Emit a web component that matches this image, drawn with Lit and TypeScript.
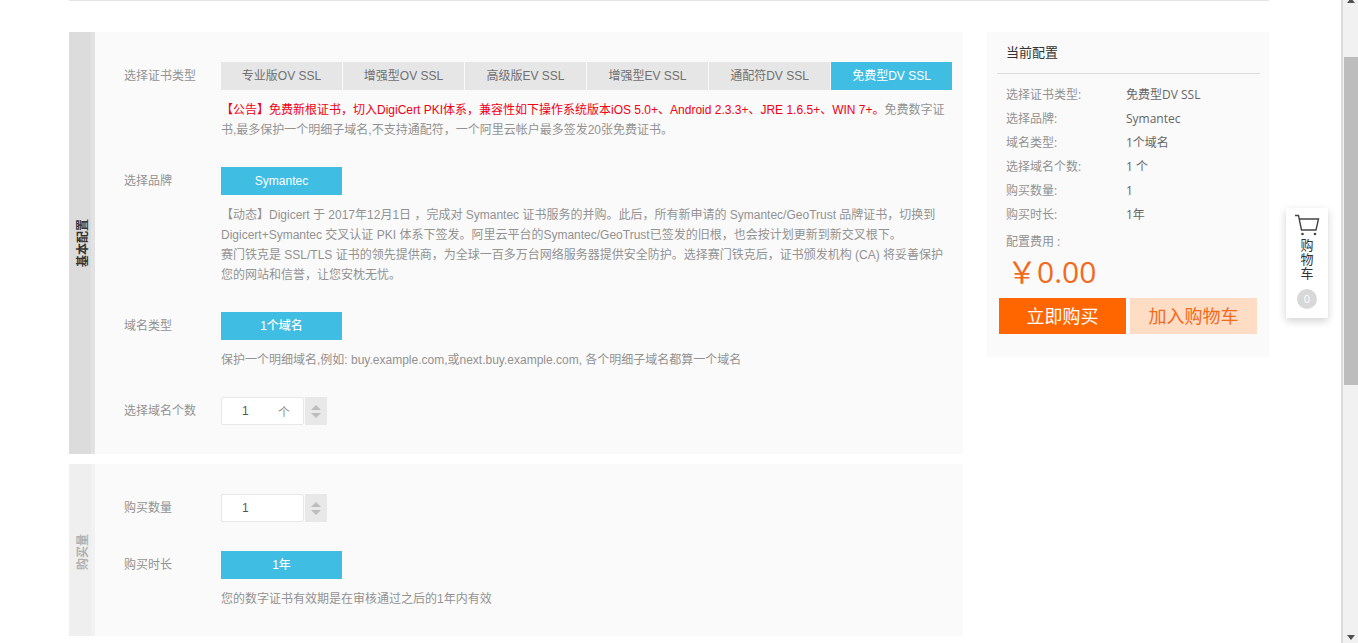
import { LitElement, html, css } from "lit";
import { customElement } from "lit/decorators.js";

const TYPES = ["专业版OV SSL", "增强型OV SSL", "高级版EV SSL", "增强型EV SSL", "通配符DV SSL", "免费型DV SSL"];
const SUMMARY: [string, string][] = [
  ["选择证书类型:", "免费型DV SSL"],
  ["选择品牌:", "Symantec"],
  ["域名类型:", "1个域名"],
  ["选择域名个数:", "1 个"],
  ["购买数量:", "1"],
  ["购买时长:", "1年"],
];

@customElement("app-root")
export class AppRoot extends LitElement {
  static styles = css`
    :host {
      display: flex;
      position: relative;
      height: 643px;
      overflow: hidden;
      background: #fff;
      font-family: "Liberation Sans", "Noto Sans CJK SC", sans-serif;
      font-size: 12px;
      color: #929292;
    }
    .page { flex: 1; min-width: 0; }
    .wrap { width: 1200px; margin-left: 69px; }
    .topline { height: 1px; background: #e4e4e4; margin-bottom: 31px; }
    .columns { display: flex; align-items: flex-start; gap: 24px; }
    .left { width: 894px; display: flex; flex-direction: column; gap: 10px; }
    .panel { display: flex; background: #fafafa; }
    .panel.basic { height: 422px; }
    .panel.buy { height: 172px; }
    .side {
      width: 26px;
      box-sizing: border-box;
      flex: none;
      display: flex;
      align-items: center;
      justify-content: center;
      background: #dcdcdc;
      border-right: 4px solid #e2e2e2;
      padding-left: 2px;
      color: #333;
      font-weight: bold;
      font-size: 12px;
    }
    .side span { writing-mode: vertical-rl; text-orientation: sideways; transform: rotate(180deg); }
    .buy .side { background: #efefef; border-right-color: #f2f2f2; color: #b0b0b0; }
    .buy .side span { transform: translateY(2px) rotate(180deg); }
    .body { flex: 1; padding: 30px 0 0 29px; display: flex; flex-direction: column; }
    .row { display: flex; }
    .label { width: 97px; flex: none; line-height: 28px; color: #929292; }
    .content { flex: 1; min-width: 0; }
    .tabs { display: flex; gap: 1px; }
    .btn {
      width: 121px;
      height: 28px;
      line-height: 28px;
      text-align: center;
      background: #e6e6e6;
      color: #707070;
      flex: none;
    }
    .btn.on { background: #40bde3; color: #fff; font-weight: 500; }
    .tabs .btn.on { font-weight: normal; }
    .note { width: 728px; line-height: 20px; margin-top: 10px; color: #929292; }
    .red { color: #f00014; }
    .r1 { margin-bottom: 27px; }
    .r2 { margin-bottom: 27px; }
    .r3 { margin-bottom: 27px; }
    .stepper { display: flex; height: 28px; gap: 1px; }
    .input {
      height: 26px;
      border: 1px solid #e8e8e8;
      background: #fff;
      display: flex;
      align-items: center;
      color: #555;
      padding-left: 20px;
      width: 61px;
      border-radius: 2px;
    }
    .input .num { flex: 1; }
    .input .unit { color: #929292; margin-right: 13px; }
    .spin {
      width: 22px;
      height: 28px;
      background: #e8e8e8;
      display: flex;
      flex-direction: column;
      align-items: center;
      justify-content: center;
      gap: 3px;
    }
    .spin i { width: 0; height: 0; border-left: 5px solid transparent; border-right: 5px solid transparent; }
    .spin i.up { border-bottom: 5px solid #bdbdbd; }
    .spin i.down { border-top: 5px solid #bdbdbd; }
    .r5 { margin-bottom: 29px; }

    .right { width: 282px; height: 325px; background: #fafafa; padding: 0 9px 0 10px; box-sizing: border-box; }
    .title {
      height: 41px;
      line-height: 41px;
      padding-left: 9px;
      font-size: 13px;
      color: #333;
      border-bottom: 1px solid #ddd;
      font-family: "Open Sans", "Noto Sans CJK SC", sans-serif;
    }
    .summary { padding: 9px 0 0 9px; font-family: "Open Sans", "Noto Sans CJK SC", sans-serif; }
    .sline { display: flex; height: 24px; line-height: 24px; }
    .sline .k { width: 120px; color: #929292; }
    .sline .v { color: #666; }
    .fee { height: 28px; line-height: 30px; color: #929292; padding-left: 9px; font-family: "Open Sans", "Noto Sans CJK SC", sans-serif; }
    .price {
      color: #f26a1b;
      font-size: 30px;
      line-height: 34px;
      padding-left: 10px;
      font-family: "Open Sans", "Noto Sans CJK SC", sans-serif;
    }
    .actions { display: flex; gap: 4px; padding-left: 2px; margin-top: 9px; }
    .actions div {
      width: 127px;
      height: 36px;
      line-height: 36px;
      text-align: center;
      font-size: 18px;
      font-family: "Open Sans", "Noto Sans CJK SC", sans-serif;
    }
    .now { background: #ff6600; color: #fff; }
    .add { background: #ffdcc4; color: #f26a1b; }

    .cart {
      position: absolute;
      left: 1286px;
      top: 208px;
      width: 42px;
      height: 110px;
      background: #fff;
      box-shadow: 0 3px 8px rgba(0, 0, 0, 0.18);
      display: flex;
      flex-direction: column;
      align-items: center;
      color: #333;
      font-size: 13px;
      font-family: "Open Sans", "Noto Sans CJK SC", sans-serif;
    }
    .cart svg { margin-top: 6px; display: block; flex: none; }
    .cart .txt { margin-top: 2px; width: 14px; line-height: 14px; text-align: center; }
    .badge {
      width: 20px;
      height: 20px;
      border-radius: 50%;
      background: #d8d8d8;
      color: #fff;
      font-size: 11px;
      line-height: 20px;
      text-align: center;
      margin-top: 9px;
    }

    .scrollbar {
      width: 15px;
      flex: none;
      background: #f1f1f1;
      border-left: 2px solid #dcdcdc;
      display: flex;
      flex-direction: column;
      align-items: center;
      position: relative;
    }
    .thumb { width: 14px; height: 328px; margin-top: 57px; background: #bdbdbd; margin-left: 1px; }
    .arrow { position: absolute; left: 4px; width: 0; height: 0; border-left: 4px solid transparent; border-right: 4px solid transparent; }
    .arrow.top { top: -2px; border-bottom: 5px solid #505050; }
    .arrow.bottom { bottom: 3px; border-top: 5px solid #505050; }
  `;

  render() {
    return html`
      <div class="page">
        <div class="wrap">
          <div class="topline"></div>
          <div class="columns">
            <div class="left">
              <section class="panel basic">
                <div class="side"><span>基本配置</span></div>
                <div class="body">
                  <div class="row r1">
                    <div class="label">选择证书类型</div>
                    <div class="content">
                      <div class="tabs">
                        ${TYPES.map((t, i) => html`<div class="btn ${i === 5 ? "on" : ""}">${t}</div>`)}
                      </div>
                      <div class="note"><span class="red">【公告】免费新根证书，切入DigiCert PKI体系，兼容性如下操作系统版本iOS 5.0+、Android 2.3.3+、JRE 1.6.5+、WIN 7+。</span>免费数字证书,最多保护一个明细子域名,不支持通配符，一个阿里云帐户最多签发20张免费证书。</div>
                    </div>
                  </div>
                  <div class="row r2">
                    <div class="label">选择品牌</div>
                    <div class="content">
                      <div class="btn on">Symantec</div>
                      <div class="note">【动态】Digicert 于 2017年12月1日 ，完成对 Symantec 证书服务的并购。此后，所有新申请的 Symantec/GeoTrust 品牌证书，切换到 Digicert+Symantec 交叉认证 PKI 体系下签发。阿里云平台的Symantec/GeoTrust已签发的旧根，也会按计划更新到新交叉根下。<br />赛门铁克是 SSL/TLS 证书的领先提供商，为全球一百多万台网络服务器提供安全防护。选择赛门铁克后，证书颁发机构 (CA) 将妥善保护您的网站和信誉，让您安枕无忧。</div>
                    </div>
                  </div>
                  <div class="row r3">
                    <div class="label">域名类型</div>
                    <div class="content">
                      <div class="btn on">1个域名</div>
                      <div class="note">保护一个明细域名,例如: buy.example.com,或next.buy.example.com, 各个明细子域名都算一个域名</div>
                    </div>
                  </div>
                  <div class="row">
                    <div class="label">选择域名个数</div>
                    <div class="stepper">
                      <div class="input"><span class="num">1</span><span class="unit">个</span></div>
                      <div class="spin"><i class="up"></i><i class="down"></i></div>
                    </div>
                  </div>
                </div>
              </section>
              <section class="panel buy">
                <div class="side"><span>购买量</span></div>
                <div class="body">
                  <div class="row r5">
                    <div class="label">购买数量</div>
                    <div class="stepper">
                      <div class="input"><span class="num">1</span></div>
                      <div class="spin"><i class="up"></i><i class="down"></i></div>
                    </div>
                  </div>
                  <div class="row">
                    <div class="label">购买时长</div>
                    <div class="content">
                      <div class="btn on">1年</div>
                      <div class="note">您的数字证书有效期是在审核通过之后的1年内有效</div>
                    </div>
                  </div>
                </div>
              </section>
            </div>
            <aside class="right">
              <div class="title">当前配置</div>
              <div class="summary">
                ${SUMMARY.map(([k, v]) => html`<div class="sline"><span class="k">${k}</span><span class="v">${v}</span></div>`)}
              </div>
              <div class="fee">配置费用 :</div>
              <div class="price">￥0.00</div>
              <div class="actions">
                <div class="now">立即购买</div>
                <div class="add">加入购物车</div>
              </div>
            </aside>
          </div>
        </div>
      </div>
      <div class="cart">
        <svg width="26" height="22" viewBox="0 0 26 22" fill="none" stroke="#444" stroke-width="1.4">
          <path d="M1 1.5h3.5l3 14.5h14.5l2.5-11H5.5" />
          <circle cx="8.5" cy="20" r="1.3" fill="#444" stroke="none" />
          <circle cx="21" cy="20" r="1.3" fill="#444" stroke="none" />
        </svg>
        <div class="txt">购物车</div>
        <div class="badge">0</div>
      </div>
      <div class="scrollbar">
        <div class="arrow top"></div>
        <div class="thumb"></div>
        <div class="arrow bottom"></div>
      </div>
    `;
  }
}
